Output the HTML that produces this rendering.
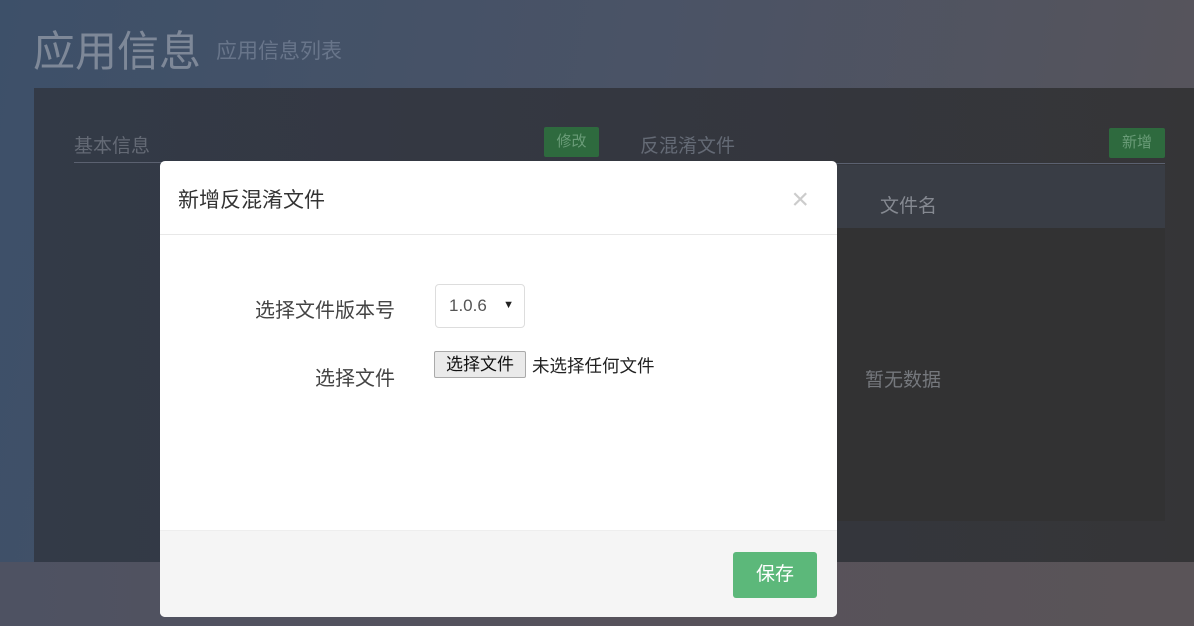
<!DOCTYPE html>
<html><head><meta charset="utf-8"><style>
*{margin:0;padding:0;box-sizing:border-box}
body{width:1194px;height:626px;overflow:hidden;position:relative;font-family:"Liberation Sans","Noto Sans CJK SC",sans-serif;
background:linear-gradient(100deg,#3d5069 0%,#4a5366 50%,#58545a 100%);}
.bottom{position:absolute;left:0;top:562px;width:1194px;height:64px;background:linear-gradient(90deg,#4e5262,#57525a 60%,#5a5458)}
.t1{position:absolute;left:33px;top:18px;font-size:42px;color:#7e8898;}
.t2{position:absolute;left:216px;top:35px;font-size:21px;color:#68758a}
.panel{position:absolute;left:34px;top:88px;width:1160px;height:474px;background:linear-gradient(90deg,#333a47,#343740 50%,#353537)}
.abs{position:absolute}
.lbl{color:#646a75;font-size:19px}
.gbtn{position:absolute;background:#2e6a3e;color:#6a9c78;font-size:15px;text-align:center;line-height:30px;border-radius:2px}
.line{position:absolute;height:1px;background:#5b6170}
.modal{position:absolute;left:160px;top:161px;width:677px;height:456px;background:#fff;border-radius:5px;overflow:hidden}
.mh{height:74px;border-bottom:1px solid #e8e8e8;font-size:21px;color:#333;padding:23px 0 0 18px}
.x{position:absolute;right:28px;top:22px;font-size:30px;color:#ccc;font-weight:300}
.mf{position:absolute;left:0;top:369px;width:677px;height:87px;background:#f5f5f5;border-top:1px solid #eee}
.save{position:absolute;left:573px;top:21px;width:84px;height:46px;background:#5cb87a;color:#fff;font-size:19px;text-align:center;line-height:46px;border-radius:3px}
.fl{position:absolute;font-size:20px;color:#444;text-align:right;width:200px}
.sel{position:absolute;left:275px;top:123px;width:90px;height:44px;border:1px solid #ddd;border-radius:4px;font-size:17px;color:#555;padding:11px 0 0 13px}
.fb{position:absolute;left:274px;top:190px;width:92px;height:27px;border:1px solid #aaa;background:#eaeaea;font-size:17px;color:#111;text-align:center;line-height:25px;border-radius:2px}
</style></head><body>
<div class="bottom"></div>
<div class="t1">应用信息</div>
<div class="t2">应用信息列表</div>
<div class="panel"></div>
<div class="abs lbl" style="left:74px;top:131px">基本信息</div>
<div class="gbtn" style="left:544px;top:127px;width:55px">修改</div>
<div class="line" style="left:74px;top:162px;width:526px"></div>
<div class="abs lbl" style="left:640px;top:131px">反混淆文件</div>
<div class="gbtn" style="left:1109px;top:128px;width:56px">新增</div>
<div class="line" style="left:640px;top:163px;width:525px"></div>
<div class="abs" style="left:837px;top:165px;width:328px;height:63px;background:#393d45"></div>
<div class="abs" style="left:837px;top:228px;width:328px;height:293px;background:#323233"></div>
<div class="abs" style="left:880px;top:191px;font-size:19px;color:#858991">文件名</div>
<div class="abs" style="left:865px;top:365px;font-size:19px;color:#75787d">暂无数据</div>
<div class="modal">
<div class="mh">新增反混淆文件</div>
<div class="x">×</div>
<div class="fl" style="left:35px;top:133px">选择文件版本号</div>
<div class="sel">1.0.6<span style="position:absolute;right:10px;top:14px;font-size:11px;color:#222">▼</span></div>
<div class="fl" style="left:35px;top:201px">选择文件</div>
<div class="fb">选择文件</div>
<div class="abs" style="left:372px;top:192px;font-size:17.5px;color:#222">未选择任何文件</div>
<div class="mf"><div class="save">保存</div></div>
</div>
</body></html>
